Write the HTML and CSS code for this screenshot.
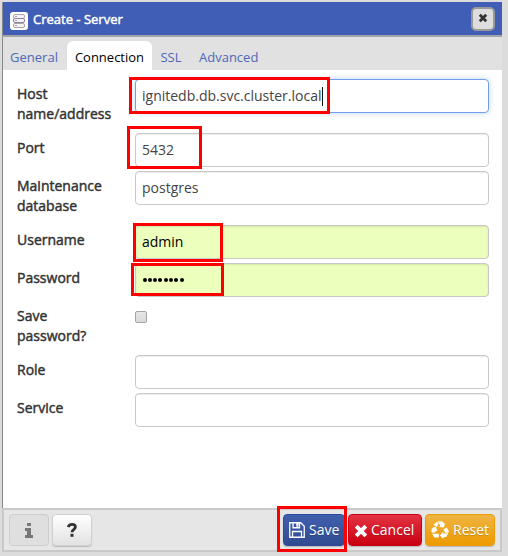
FILE: index.html
```html
<!DOCTYPE html>
<html lang="en">
<head>
<meta charset="utf-8">
<title>Create - Server</title>
<link rel="stylesheet" href="styles.css">
</head>
<body>
<main class="dialog">
  <header class="header">
    <span class="server-icon"><svg width="18" height="18" viewBox="0 0 18 18"><g fill="#f5f3f6" stroke="#aaa5ac"><rect x="3.5" y="2.5" width="11" height="4" rx="1.5"/><rect x="3.5" y="11.5" width="11" height="4" rx="1.5"/><rect x="3.5" y="6.5" width="11" height="4" rx="1.5" stroke="#8d829b"/></g><path d="M5 4.5h2M5 8.5h2M5 13.5h2" stroke="#a9a2af"/></svg></span>
    <h1 class="title">Create - Server</h1>
    <button class="close" aria-label="Close"><svg width="10" height="10" viewBox="0 0 10 10"><path d="M1.8 1.8l6.400 6.400M8.200 1.800l-6.400 6.400" stroke="#333" stroke-width="2.800"/></svg></button>
  </header>
  <nav class="tabs">
    <a class="tab general">General</a><a class="tab active">Connection</a><a class="tab ssl">SSL</a><a class="tab advanced">Advanced</a>
  </nav>
  <section class="form">
    <div class="row tall"><label>Host name/address</label><div class="field focused">ignitedb.db.svc.cluster.local<i class="caret"></i></div></div>
    <div class="row"><label>Port</label><div class="field">5432</div></div>
    <div class="row tall"><label>Maintenance database</label><div class="field">postgres</div></div>
    <div class="row"><label>Username</label><div class="field filled">admin</div></div>
    <div class="row"><label>Password</label><div class="field filled"><span class="dots"><i></i><i></i><i></i><i></i><i></i><i></i><i></i><i></i></span></div></div>
    <div class="row tall"><label>Save password?</label><span class="check"></span></div>
    <div class="row"><label>Role</label><div class="field"></div></div>
    <div class="row"><label>Service</label><div class="field"></div></div>
  </section>
  <footer class="footer">
    <button class="btn small disabled" aria-label="Information"><svg width="8" height="15" viewBox="0 0 8 15"><path fill="#777" d="M2 0h4v3H2zM0 5h6v7h2v3H0v-3h2V8H0z"/></svg></button>
    <button class="btn small help" aria-label="Help"><svg width="10" height="14" viewBox="0 0 10 14"><path d="M1.2 4.1Q2.2 1.4 5 1.4c2.2 0 3.4 1.1 3.4 2.7C8.400 6.400 5 6.300 5 9.300" fill="none" stroke="#333" stroke-width="2.800"/><path d="M3.500 10.800h3v3h-3z" fill="#333"/></svg></button>
    <span class="spacer"></span>
    <button class="btn save"><svg width="16" height="16" viewBox="0 0 16 16"><path d="M.75.75h11l3.500 3.500v11H.75zM3.500 15V9.500h9V15M4 1v4.750h6.500V1" fill="none" stroke="#fff" stroke-width="1.300"/><path d="M7.300 1h2.200v3.700H7.300z" fill="#fff"/></svg><span>Save</span></button>
    <button class="btn cancel"><svg width="14" height="14" viewBox="0 0 14 14"><path d="M2.200 2.200l9.600 9.600M11.800 2.200l-9.600 9.600" stroke="#fff" stroke-width="4"/></svg><span>Cancel</span></button>
    <button class="btn reset"><svg width="18" height="18" viewBox="0 0 18 18"><g fill="#fff"><path d="M6.300.5h5.300l1.500 2.200 1.300-.7-1.700 4.600-4.700-.7 1.400-.9L7.800 2z"/><path d="M5.500 1.100l2.300 1.200-2 3.600-3.200-1.900z"/><path d="M.2 7.200l4.600-1.500 1.700 4.500-1.400-.7-1 2.100H.8l-.7-1.800 1.400-1.800z"/><path d="M1 12.700h6.800v3.800H3.500z"/><path d="M9 14.500l3.200-3.900v1.800h3.200l2.200-1.200-2.200 4.600-3.200.7V18z"/><path d="M12.400 8.400l3.300-1.900 2.200 3.500-.9 1.700h-2.800z"/></g></svg><span>Reset</span></button>
  </footer>
</main>
<div class="mark host"></div><div class="mark port"></div><div class="mark user"></div><div class="mark pass"></div><div class="mark submit"></div>
</body>
</html>
```
FILE: styles.css
```css
* { box-sizing: border-box; }
body { margin: 0; padding: 2px 6px 3px 2px; height: 556px; overflow: hidden; background: #dcdcdc; color: #333; font: 14px/20px "Open Sans", sans-serif; position: relative; }
.dialog { width: 500px; height: 550px; display: flex; flex-direction: column; background: #fff; }
.header { height: 35px; flex: none; display: flex; align-items: center; background: #405eb5; border-bottom: 2px solid #a4a5a8; border-left: 1px solid #888; padding: 0 7px 0; }
.server-icon { width: 18px; height: 18px; border-radius: 3px; background: #fff; display: flex; margin-top: 5px; }
.title { margin: 0 auto 0 5px; font-size: 13px; line-height: 20px; font-weight: 400; color: #fff; -webkit-text-stroke: .45px #fff; }
.close { width: 24px; height: 24px; padding: 0 0 2px; border: 2px solid #999; border-radius: 5px; background: #dedede; display: flex; align-items: center; justify-content: center; }
.tabs { height: 33px; flex: none; display: flex; align-items: flex-end; background: #e1e1e1; border-left: 1px solid #888; padding-left: 7px; font-size: 13px; }
.tab { height: 29px; padding-top: 6px; color: #4d68b9; text-align: center; white-space: nowrap; }
.general { width: 48px; margin-right: 9px; }
.active { width: 85px; background: #fff; color: #000; border-radius: 6px 6px 0 0; }
.ssl { width: 22px; margin: 0 17px 0 8px; }
.form { flex: 1; border-left: 1px solid #888; padding: 9px 13px 0 14px; }
.row { display: flex; height: 38px; }
.row.tall { height: 54px; }
label { width: 118px; padding: 5px 15px 0 0; flex: none; -webkit-text-stroke: .45px #333; }
.field { flex: 1; height: 34px; border: 1px solid #c9c9c9; border-radius: 4px; background: #fff; box-shadow: inset 0 1px 1px rgba(0,0,0,.075); padding: 6px; display: flex; align-items: center; color: #444; }
.field.focused { border-color: #719fe7; box-shadow: 0 0 6px rgba(102,153,233,.4); }
.field.filled { background: #edffbc; color: #000; border-color: #c8c8c8; box-shadow: inset 0 1px 2px rgba(0,0,0,.1); }
.caret { width: 1px; height: 19px; background: #111; }
.dots { display: flex; gap: 1.3px; padding: 0 0 1px .5px; }
.dots i { width: 4px; height: 4px; border-radius: 50%; background: #000; }
.check { width: 12px; height: 12px; margin-top: 10px; border: 1px solid #a5a5a5; border-radius: 2px; background: linear-gradient(#e6e6e6,#dadada); }
.footer { height: 44px; flex: none; border: 2px solid #c9c9c9; background: #e6e6e6; display: flex; align-items: center; padding: 0 5px; }
.spacer { flex: 1; }
.btn { height: 32px; border: 1px solid; border-radius: 4px; padding: 0 5px; font: 14px/20px "Open Sans", sans-serif; color: #fff; display: flex; align-items: center; flex: none; box-shadow: 0 1px 1px rgba(0,0,0,.2); text-shadow: 0 1px 1px rgba(0,0,0,.2); }
.btn svg { flex: none; }
.small { width: 40px; justify-content: center; }
.disabled { background: #dfdfdf; border-color: #cdcdcd; margin-right: 3px; box-shadow: none; }
.help { background: linear-gradient(#fff,#e2e2e2); border-color: #d0d0d0; }
.save { width: 62px; background: linear-gradient(#405fae,#304b91); border-color: #2e4c9d; margin-right: 3px; }
.save span { margin-left: 4px; }
.cancel { width: 74px; background: linear-gradient(#e33343,#c90010); border-color: #cc0014; margin-right: 3px; }
.cancel span { margin-left: 3px; }
.cancel svg { margin-top: 2px; }
.reset { width: 70px; background: linear-gradient(#efb443,#ed9b00); border-color: #eb9b08; }
.reset span { margin-left: 4px; }
.mark { position: absolute; border: 3px solid #f00; }
.host { left: 129px; top: 77px; width: 201px; height: 37px; }
.port { left: 127px; top: 126px; width: 75px; height: 43px; }
.user { left: 133px; top: 223px; width: 90px; height: 39px; }
.pass { left: 131px; top: 263px; width: 93px; height: 33px; }
.submit { left: 277px; top: 506px; width: 70px; height: 46px; }
```
